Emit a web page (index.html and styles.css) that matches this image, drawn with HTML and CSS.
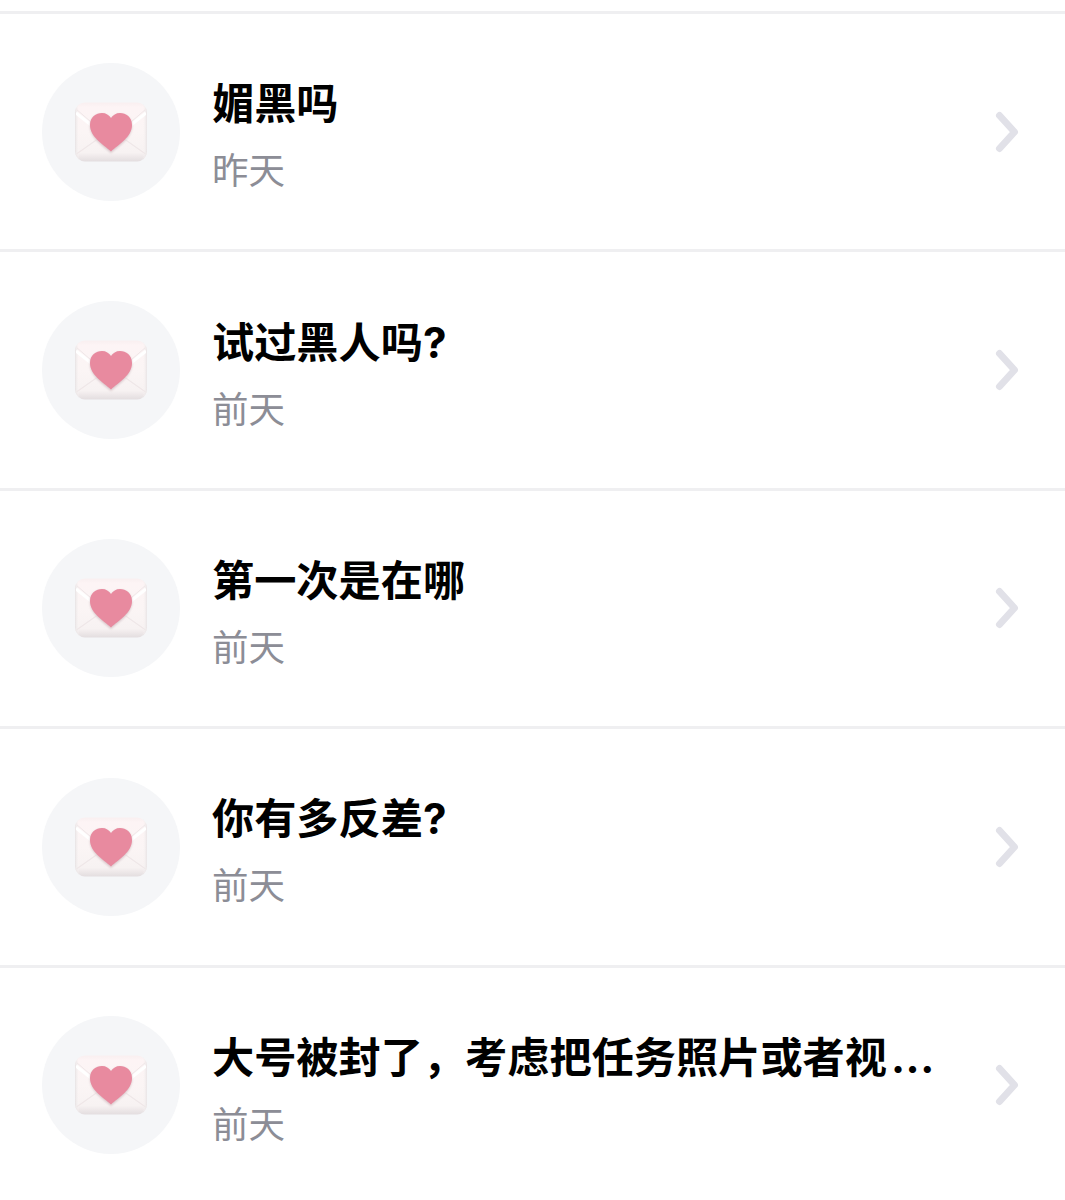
FILE: index.html
```html
<!DOCTYPE html>
<html lang="zh-CN">
<head>
<meta charset="utf-8">
<title>消息列表</title>
<link rel="stylesheet" href="styles.css">
</head>
<body>
<svg class="defs" width="0" height="0" aria-hidden="true">
  <defs>
    <linearGradient id="env" x1="0" y1="0" x2="0" y2="1">
      <stop offset="0" stop-color="#f9eff0"/>
      <stop offset="0.08" stop-color="#fdf4f5"/>
      <stop offset="0.5" stop-color="#fbf5f5"/>
      <stop offset="0.85" stop-color="#f7f2f2"/>
      <stop offset="1" stop-color="#e3dddf"/>
    </linearGradient>
    <linearGradient id="flank" x1="0" y1="0" x2="1" y2="0">
      <stop offset="0" stop-color="#e6e2e3"/>
      <stop offset="0.06" stop-color="#f8f4f4" stop-opacity="0"/>
      <stop offset="0.94" stop-color="#f8f4f4" stop-opacity="0"/>
      <stop offset="1" stop-color="#e8e3e4"/>
    </linearGradient>
    <clipPath id="envclip"><rect x="2" y="2" width="70" height="56" rx="9"/></clipPath>
    <filter id="soft" x="-10%" y="-10%" width="120%" height="120%"><feGaussianBlur stdDeviation="0.7"/></filter>
    <filter id="softer" x="-20%" y="-20%" width="140%" height="140%"><feGaussianBlur stdDeviation="1.2"/></filter>
    <symbol id="letter" viewBox="0 0 74 60">
      <rect x="1" y="0.5" width="72" height="59" rx="10" fill="url(#env)" filter="url(#soft)"/>
      <rect x="1" y="0.5" width="72" height="59" rx="10" fill="url(#flank)" filter="url(#soft)"/>
      <g clip-path="url(#envclip)">
        <path d="M2 11 L31 34 M72 11 L43 34" stroke="#ffffff" stroke-width="3" fill="none" filter="url(#soft)"/>
        <path d="M1 53 L28 34 M73 53 L46 34" stroke="#efe7e8" stroke-width="1.2" fill="none" filter="url(#soft)"/>
        <path d="M2 7 L31 32 M72 7 L43 32" stroke="#efe7e8" stroke-width="1" fill="none" filter="url(#soft)"/>
      </g>
      <path d="M37 50 C29 43 16 35 16 23 C16 15 22 11 28 11 C32 11 35 13 37 16 C39 13 42 11 46 11 C52 11 58 15 58 23 C58 35 45 43 37 50 Z" fill="#d9c6ca" filter="url(#softer)" transform="translate(0 1)"/>
      <path d="M37 49.5 C29 42 16 35 16 23 C16 15 22 11 28 11 C32 11 35 13 37 16 C39 13 42 11 46 11 C52 11 58 15 58 23 C58 35 45 42 37 49.5 Z" fill="#e88a9f" filter="url(#soft)"/>
    </symbol>
    <symbol id="chevron" viewBox="0 0 24 42">
      <path d="M4.5 4.5 L19.5 21 L4.5 37.5" fill="none" stroke="#e1e1e8" stroke-width="7" stroke-linecap="round" stroke-linejoin="round"/>
    </symbol>
  </defs>
</svg>
<ul class="list">
  <li class="row">
    <div class="avatar"><svg class="letter"><use href="#letter"/></svg></div>
    <div class="body"><div class="title">媚黑吗</div><div class="time">昨天</div></div>
    <svg class="chevron"><use href="#chevron"/></svg>
  </li>
  <li class="row">
    <div class="avatar"><svg class="letter"><use href="#letter"/></svg></div>
    <div class="body"><div class="title">试过黑人吗?</div><div class="time">前天</div></div>
    <svg class="chevron"><use href="#chevron"/></svg>
  </li>
  <li class="row">
    <div class="avatar"><svg class="letter"><use href="#letter"/></svg></div>
    <div class="body"><div class="title">第一次是在哪</div><div class="time">前天</div></div>
    <svg class="chevron"><use href="#chevron"/></svg>
  </li>
  <li class="row">
    <div class="avatar"><svg class="letter"><use href="#letter"/></svg></div>
    <div class="body"><div class="title">你有多反差?</div><div class="time">前天</div></div>
    <svg class="chevron"><use href="#chevron"/></svg>
  </li>
  <li class="row">
    <div class="avatar"><svg class="letter"><use href="#letter"/></svg></div>
    <div class="body"><div class="title">大号被封了&#65292;考虑把任务照片或者视<span class="dots">...</span></div><div class="time">前天</div></div>
    <svg class="chevron"><use href="#chevron"/></svg>
  </li>
</ul>
</body>
</html>
```
FILE: styles.css
```css
html, body {
  margin: 0;
  padding: 0;
  background: #fff;
}
body {
  height: 1200px;
  overflow: hidden;
  font-family: Inter, "Noto Sans CJK SC", sans-serif;
}
.defs {
  position: absolute;
}
.list {
  list-style: none;
  margin: 0;
  padding: 11px 0 0;
}
.row {
  height: 238.4px;
  box-sizing: border-box;
  border-top: 3px solid #efeff1;
  display: flex;
  align-items: center;
  padding: 0 46px 0 42px;
}
.avatar {
  width: 138px;
  height: 138px;
  flex: none;
  border-radius: 50%;
  background: #f5f6f8;
  display: flex;
  align-items: center;
  justify-content: center;
}
.letter {
  width: 74px;
  height: 60px;
}
.body {
  flex: 1;
  min-width: 0;
  margin-left: 32px;
  padding-top: 9px;
  display: flex;
  flex-direction: column;
  gap: 20px;
}
.title {
  font-size: 42.2px;
  line-height: 50px;
  font-weight: 700;
  color: #000;
  white-space: nowrap;
}
.dots {
  letter-spacing: 0.5px;
  margin-left: 4px;
}
.time {
  font-size: 36.5px;
  line-height: 44px;
  color: #8c8d96;
}
.chevron {
  width: 24px;
  height: 42px;
  flex: none;
}
```
